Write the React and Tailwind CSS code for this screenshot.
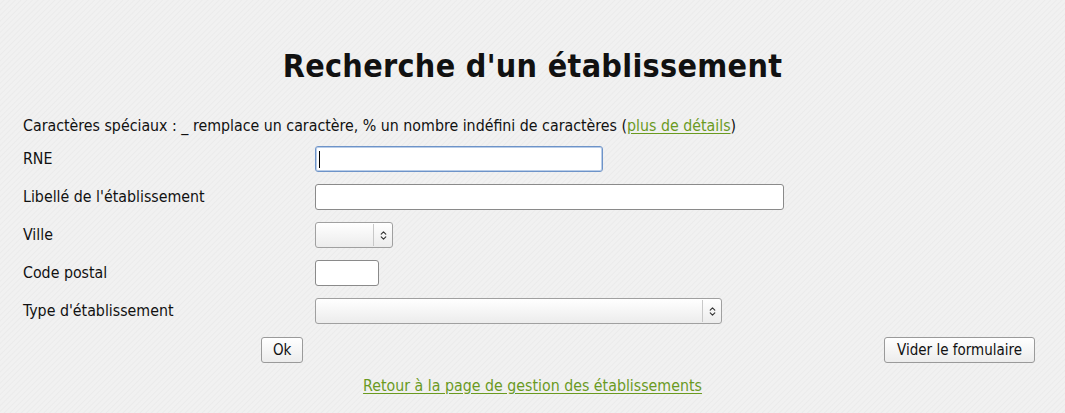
import { ChevronsUpDown } from "lucide-react";

const rows = [
  { label: "RNE", kind: "input", width: "w-[288px]", focus: true },
  { label: "Libellé de l'établissement", kind: "input", width: "w-[469px]" },
  { label: "Ville", kind: "select", width: "w-[78px]" },
  { label: "Code postal", kind: "input", width: "w-[64px]" },
  { label: "Type d'établissement", kind: "select", width: "w-[407px]" },
];

const Field = ({ kind, width, focus }) => {
  if (kind === "select") {
    return (
      <div
        className={`${width} h-[26px] flex items-center rounded-[3px] border border-[#a0a0a0] bg-gradient-to-b from-white to-[#ececec]`}
      >
        <div className="flex-1" />
        <div className="w-px h-[22px] bg-[#c8c8c8]" />
        <div className="w-[18px] flex justify-center">
          <ChevronsUpDown className="w-[11px] h-[11px] text-[#333]" strokeWidth={2.5} />
        </div>
      </div>
    );
  }
  return (
    <div
      className={`${width} h-[26px] rounded-[3px] bg-white border ${
        focus ? "border-[#6d93c8] shadow-[inset_0_0_0_1px_#b9cde8]" : "border-[#8a8a8a]"
      } flex items-center px-[2px]`}
    >
      {focus && <div className="w-px h-[17px] bg-black ml-[1px]" />}
    </div>
  );
};

export default function App() {
  return (
    <div className="min-h-[413px] bg-[#efefef] bg-[repeating-linear-gradient(135deg,#f1f1f1_0px,#f1f1f1_2px,#ebebeb_3px,#f1f1f1_4px)] font-['DejaVu_Sans',sans-serif] font-stretch-condensed text-[15.8px] text-[#111]">
      {/* Title */}
      <h1 className="pt-[44px] text-center text-[32px] font-bold leading-[44px] tracking-[0.3px]">
        Recherche d'un établissement
      </h1>

      <div className="px-[23px] pt-[27px]">
        <p className="leading-[22px]">
          Caractères spéciaux : _ remplace un caractère, % un nombre indéfini de caractères (
          <a href="#" className="text-[#6a9a1f] underline underline-offset-2">
            plus de détails
          </a>
          )
        </p>

        {/* Form rows */}
        <div className="mt-[9px] flex flex-col gap-[12px]">
          {rows.map((row) => (
            <div key={row.label} className="flex items-center">
              <span className="w-[292px]">{row.label}</span>
              <Field kind={row.kind} width={row.width} focus={row.focus} />
            </div>
          ))}
        </div>

        {/* Buttons */}
        <div className="mt-[13px] flex items-center justify-between pl-[238px] pr-[7px]">
          <button className="h-[26px] px-[11px] rounded-[3px] border border-[#9a9a9a] bg-gradient-to-b from-white to-[#ececec] text-[15px]">
            Ok
          </button>
          <button className="h-[26px] px-[12px] rounded-[3px] border border-[#9a9a9a] bg-gradient-to-b from-white to-[#ececec] text-[15px]">
            Vider le formulaire
          </button>
        </div>

        <div className="mt-[11px] text-center">
          <a href="#" className="text-[#6a9a1f] underline underline-offset-2">
            Retour à la page de gestion des établissements
          </a>
        </div>
      </div>
    </div>
  );
}
